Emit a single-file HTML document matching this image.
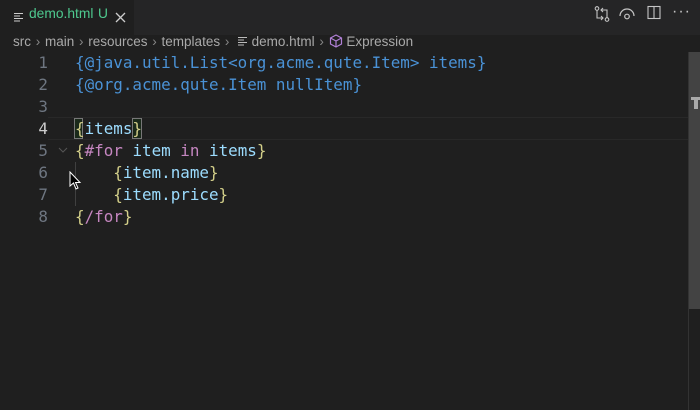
<!DOCTYPE html>
<html><head><meta charset="utf-8"><style>
body{margin:0;width:700px;height:410px;background:#1f1f1f;overflow:hidden;position:relative;font-family:"Liberation Sans","DejaVu Sans",sans-serif}
.tabs{position:absolute;left:0;top:0;width:700px;height:35px;background:#252526}
.tab{position:absolute;left:0;top:0;width:134px;height:35px;background:#1f1f1f;color:#4ec98f;font-size:13.8px}
.bc{position:absolute;left:13px;top:33px;height:18px;line-height:18px;font-size:13.5px;color:#a9a9a9;white-space:nowrap}
.bc s{text-decoration:none;color:#888;margin:0 1px}
.code{position:absolute;left:0;top:52px;font-family:"DejaVu Sans Mono",monospace;font-size:15.9px}
.ln{position:absolute;left:0;width:48px;text-align:right;color:#6e7681;height:22px;line-height:22px}
.tx{position:absolute;left:75px;height:22px;line-height:22px;white-space:pre}
.b{color:#d4d08a}.p{color:#4a92d6}.v{color:#9cdcfe}.k{color:#c586c0}
</style></head><body>
<div class="tabs">
<div class="tab">
<svg style="position:absolute;left:14px;top:12px" width="10" height="10"><path d="M0 1.5H9M0 4H6M0 6.5H9M0 9H6" stroke="#ccc" stroke-width="1"/></svg>
<span style="position:absolute;left:29px;top:6px">demo.html</span>
<span style="position:absolute;left:98px;top:6px">U</span>
<svg style="position:absolute;left:115px;top:12px" width="11" height="11"><path d="M1 1L10 10M10 1L1 10" stroke="#ccc" stroke-width="1.3"/></svg>
</div>
<svg style="position:absolute;left:594px;top:6px" width="16" height="16" fill="none" stroke="#c5c5c5" stroke-width="1.1"><circle cx="3" cy="2.5" r="1.8"/><circle cx="13" cy="13.5" r="1.8"/><path d="M3 4.5V12H9M7 10L9 12L7 14M13 11.5V4H7M9 2L7 4L9 6"/></svg>
<svg style="position:absolute;left:619px;top:6px" width="16" height="16" fill="none" stroke="#c5c5c5" stroke-width="1.2"><path d="M1 10A7 7 0 0 1 15 10"/><circle cx="8" cy="10.5" r="2.3"/></svg>
<svg style="position:absolute;left:647px;top:5px" width="14" height="15" fill="none" stroke="#c5c5c5" stroke-width="1.1"><rect x="1" y="1.5" width="12" height="12"/><path d="M7 1.5V13.5"/></svg>
<span style="position:absolute;left:672px;top:3px;color:#c5c5c5;font-size:16px;letter-spacing:1px">···</span>
</div>
<div class="bc">src <s>›</s> main <s>›</s> resources <s>›</s> templates <s>›</s> &nbsp;<svg width="10" height="10"><path d="M0 1.5H9M0 4H6M0 6.5H9M0 9H6" stroke="#bbb"/></svg> demo.html <s>›</s> <svg width="14" height="14" style="vertical-align:-2px" fill="none" stroke="#b180d7" stroke-width="1.2"><path d="M7 1L12.5 4V10L7 13L1.5 10V4Z M1.5 4L7 7L12.5 4M7 7V13"/></svg> Expression</div>
<div style="position:absolute;left:48px;top:117px;width:640px;height:21px;border-top:1px solid #282828;border-bottom:1px solid #282828"></div>
<div style="position:absolute;left:74px;top:118px;width:9px;height:21px;border:1px solid #777;box-sizing:border-box;background:rgba(0,100,0,.15)"></div>
<div style="position:absolute;left:132px;top:118px;width:10px;height:21px;border:1px solid #777;box-sizing:border-box;background:rgba(0,100,0,.15)"></div>
<div style="position:absolute;left:75px;top:162px;width:1px;height:44px;background:#404040"></div>
<div class="code">
<div class="ln" style="top:0">1</div><div class="tx p" style="top:0">{@java.util.List&lt;org.acme.qute.Item&gt; items}</div>
<div class="ln" style="top:22px">2</div><div class="tx p" style="top:22px">{@org.acme.qute.Item nullItem}</div>
<div class="ln" style="top:44px">3</div>
<div class="ln" style="top:66px;color:#ccc">4</div><div class="tx" style="top:66px"><span class="b">{</span><span class="v">items</span><span class="b">}</span></div>
<div class="ln" style="top:88px">5</div><div class="tx" style="top:88px"><span class="b">{</span><span class="k">#for</span> <span class="v">item</span> <span class="k">in</span> <span class="v">items</span><span class="b">}</span></div>
<div class="ln" style="top:110px">6</div><div class="tx" style="top:110px">    <span class="b">{</span><span class="v">item.name</span><span class="b">}</span></div>
<div class="ln" style="top:132px">7</div><div class="tx" style="top:132px">    <span class="b">{</span><span class="v">item.price</span><span class="b">}</span></div>
<div class="ln" style="top:154px">8</div><div class="tx" style="top:154px"><span class="b">{</span><span class="k">/for</span><span class="b">}</span></div>
</div>
<svg style="position:absolute;left:58px;top:146px" width="10" height="8"><path d="M1 2L5 6L9 2" stroke="#555" fill="none"/></svg>
<svg style="position:absolute;left:69px;top:171px" width="14" height="20"><path d="M1 1V15L4.5 12L7 18L9 17L6.5 11.5H11Z" fill="#000" stroke="#fff" stroke-width="1"/></svg>
<div style="position:absolute;left:688px;top:52px;width:1px;height:358px;background:#333"></div>
<div style="position:absolute;left:689px;top:52px;width:11px;height:257px;background:#434343"></div>
<div style="position:absolute;left:691px;top:97px;width:9px;height:3px;background:#aaa"></div>
<div style="position:absolute;left:694px;top:97px;width:4px;height:12px;background:#aaa"></div>
</body></html>
